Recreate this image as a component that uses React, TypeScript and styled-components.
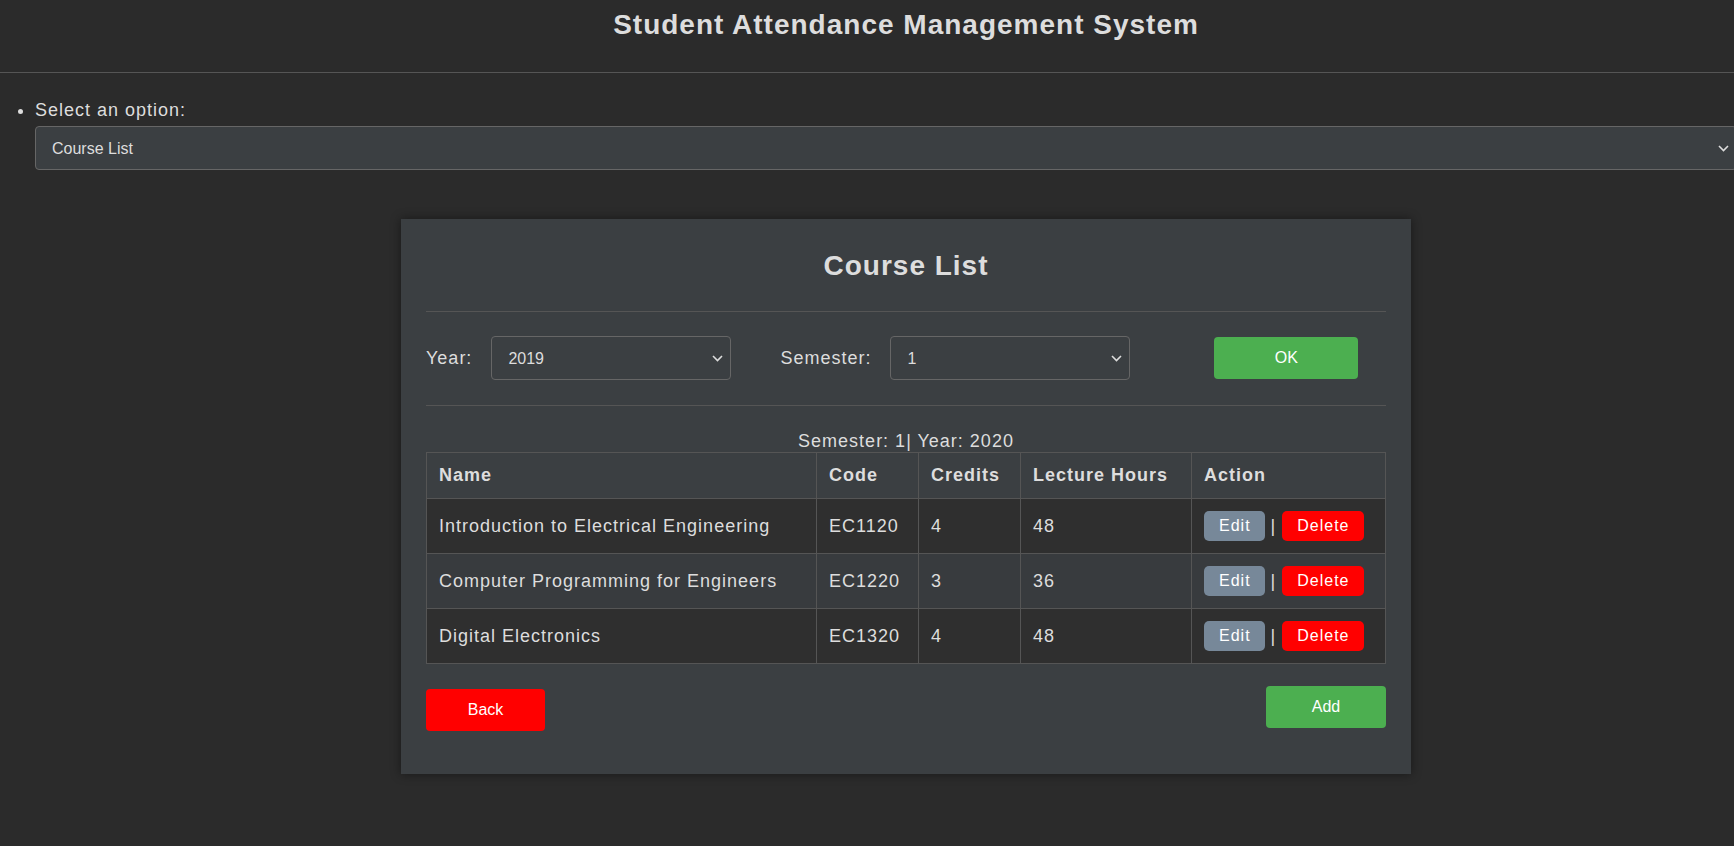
import React, { useState } from "react";
import styled, { createGlobalStyle } from "styled-components";

const GlobalStyle = createGlobalStyle`
  html, body {
    margin: 0;
    padding: 0;
    background: #2b2b2b;
    overflow-x: hidden;
  }
  body {
    font-family: "Liberation Sans", Arial, sans-serif;
    color: #ddd;
  }
  * {
    box-sizing: border-box;
  }
`;

const PageWrapper = styled.div`
  min-height: 100vh;
  background: #2b2b2b;
  overflow-x: hidden;
`;

// the header in the original is wider than the window, so its title sits right of centre
const Header = styled.header`
  width: 1812px;
  height: 72px;
  box-sizing: content-box;
  border-bottom: 1px solid #555;
  display: flex;
  justify-content: center;
`;

const Title = styled.h1`
  margin: 9px 0 0;
  font-size: 28px;
  line-height: 32px;
  font-weight: 700;
  letter-spacing: 1px;
  color: #ddd;
`;

const OptionList = styled.ul`
  margin: 27px 0 0;
  padding: 0 0 0 35px;
  list-style: disc;
`;

const OptionItem = styled.li`
  font-size: 18px;
  line-height: 21px;
  letter-spacing: 1px;
  color: #ddd;
`;

const SelectWrap = styled.div<{ $width: string }>`
  position: relative;
  width: ${({ $width }) => $width};
  height: 44px;
  flex-shrink: 0;
`;

const NativeSelect = styled.select`
  appearance: none;
  -webkit-appearance: none;
  width: 100%;
  height: 100%;
  padding: 0 30px 0 16px;
  background: #3b3f42;
  color: #ddd;
  border: 1px solid #666;
  border-radius: 4px;
  font-family: "Liberation Sans", Arial, sans-serif;
  font-size: 16px;
  letter-spacing: 0;
  outline: none;
`;

const Chevron = styled.svg`
  position: absolute;
  right: 8px;
  top: 50%;
  margin-top: -3px;
  pointer-events: none;
`;

const MainSelectWrap = styled(SelectWrap)`
  margin-top: 5px;
`;

const Card = styled.div`
  width: 1010px;
  margin: 49px 0 60px 366px;
  padding: 31px 25px 43px;
  background: #3b3f42;
  box-shadow: 0 0 10px rgba(0, 0, 0, 0.45);
  letter-spacing: 1px;
`;

const CardTitle = styled.h2`
  margin: 0;
  text-align: center;
  font-size: 28px;
  line-height: 32px;
  font-weight: 700;
  letter-spacing: 1px;
  color: #ddd;
`;

const Divider = styled.hr<{ $top: number; $bottom: number }>`
  border: none;
  height: 1px;
  background: #555;
  margin: ${({ $top, $bottom }) => `${$top}px 0 ${$bottom}px`};
`;

const FilterRow = styled.div`
  display: flex;
  align-items: center;
  height: 44px;
`;

const FilterLabel = styled.label<{ $left?: number; $right: number }>`
  font-size: 18px;
  letter-spacing: 1px;
  color: #ddd;
  margin-left: ${({ $left }) => $left ?? 0}px;
  margin-right: ${({ $right }) => $right}px;
`;

const ActionButton = styled.button<{ $color: string; $width: number }>`
  width: ${({ $width }) => $width}px;
  height: 42px;
  border: none;
  border-radius: 4px;
  background: ${({ $color }) => $color};
  color: #fff;
  font-family: "Liberation Sans", Arial, sans-serif;
  font-size: 16px;
  letter-spacing: 0;
  cursor: pointer;
`;

const OkButton = styled(ActionButton)`
  margin-left: 84px;
`;

const Table = styled.table`
  width: 100%;
  border-collapse: collapse;
  table-layout: fixed;
  font-size: 18px;
  line-height: 21px;
  letter-spacing: 1px;
  color: #ddd;
`;

const Caption = styled.caption`
  caption-side: top;
  text-align: center;
  line-height: 22px;
`;

const HeadCell = styled.th`
  text-align: left;
  font-weight: 700;
  padding: 12px;
  border: 1px solid #555;
`;

const Row = styled.tr<{ $dark: boolean }>`
  background: ${({ $dark }) => ($dark ? "#2f2f2f" : "#383b3e")};
`;

const Cell = styled.td`
  padding: 12px;
  border: 1px solid #555;
  vertical-align: middle;
`;

const ActionGroup = styled.div`
  display: flex;
  align-items: center;
  white-space: pre;
`;

const SmallButton = styled.button<{ $color: string }>`
  height: 30px;
  padding: 0 14px 0 15px;
  border: none;
  border-radius: 5px;
  background: ${({ $color }) => $color};
  color: #fff;
  font-family: "Liberation Sans", Arial, sans-serif;
  font-size: 16px;
  letter-spacing: 1px;
  cursor: pointer;
`;

const BottomRow = styled.div`
  display: flex;
  justify-content: space-between;
  align-items: flex-start;
  margin-top: 22px;
`;

const BackButton = styled(ActionButton)`
  margin-top: 3px;
`;

const ChevronIcon = () => (
  <Chevron width="11" height="7" viewBox="0 0 11 7">
    <path d="M1 1l4.5 4.5L10 1" fill="none" stroke="#ddd" strokeWidth="1.6" />
  </Chevron>
);

const courses = [
  { name: "Introduction to Electrical Engineering", code: "EC1120", credits: 4, hours: 48 },
  { name: "Computer Programming for Engineers", code: "EC1220", credits: 3, hours: 36 },
  { name: "Digital Electronics", code: "EC1320", credits: 4, hours: 48 },
];

const App = () => {
  const [option, setOption] = useState("courses");
  const [year, setYear] = useState("2019");
  const [semester, setSemester] = useState("1");

  return (
    <PageWrapper>
      <GlobalStyle />
      <Header>
        <Title>Student Attendance Management System</Title>
      </Header>

      <OptionList>
        <OptionItem>
          Select an option:
          <MainSelectWrap $width="calc(100% + 3px)">
            <NativeSelect value={option} onChange={(e) => setOption(e.target.value)}>
              <option value="courses">Course List</option>
              <option value="students">Student List</option>
              <option value="attendance">Attendance</option>
            </NativeSelect>
            <ChevronIcon />
          </MainSelectWrap>

          <Card>
            <CardTitle>Course List</CardTitle>
            <Divider $top={29} $bottom={24} />

            <FilterRow>
              <FilterLabel $right={19}>Year:</FilterLabel>
              <SelectWrap $width="240px">
                <NativeSelect value={year} onChange={(e) => setYear(e.target.value)}>
                  <option>2019</option>
                  <option>2020</option>
                  <option>2021</option>
                </NativeSelect>
                <ChevronIcon />
              </SelectWrap>
              <FilterLabel $left={49} $right={19}>Semester:</FilterLabel>
              <SelectWrap $width="240px">
                <NativeSelect value={semester} onChange={(e) => setSemester(e.target.value)}>
                  <option>1</option>
                  <option>2</option>
                </NativeSelect>
                <ChevronIcon />
              </SelectWrap>
              <OkButton $color="#4caf50" $width={144}>OK</OkButton>
            </FilterRow>

            <Divider $top={25} $bottom={24} />

            <Table>
              <Caption>Semester: 1| Year: 2020</Caption>
              <colgroup>
                <col style={{ width: 390 }} />
                <col style={{ width: 102 }} />
                <col style={{ width: 102 }} />
                <col style={{ width: 171 }} />
                <col />
              </colgroup>
              <thead>
                <tr>
                  <HeadCell>Name</HeadCell>
                  <HeadCell>Code</HeadCell>
                  <HeadCell>Credits</HeadCell>
                  <HeadCell>Lecture Hours</HeadCell>
                  <HeadCell>Action</HeadCell>
                </tr>
              </thead>
              <tbody>
                {courses.map((c, i) => (
                  <Row key={c.code} $dark={i % 2 === 0}>
                    <Cell>{c.name}</Cell>
                    <Cell>{c.code}</Cell>
                    <Cell>{c.credits}</Cell>
                    <Cell>{c.hours}</Cell>
                    <Cell>
                      <ActionGroup>
                        <SmallButton $color="#778899">Edit</SmallButton>
                        {" | "}
                        <SmallButton $color="#ff0000">Delete</SmallButton>
                      </ActionGroup>
                    </Cell>
                  </Row>
                ))}
              </tbody>
            </Table>

            <BottomRow>
              <BackButton $color="#ff0000" $width={119}>Back</BackButton>
              <ActionButton $color="#4caf50" $width={120}>Add</ActionButton>
            </BottomRow>
          </Card>
        </OptionItem>
      </OptionList>
    </PageWrapper>
  );
};

export default App;
